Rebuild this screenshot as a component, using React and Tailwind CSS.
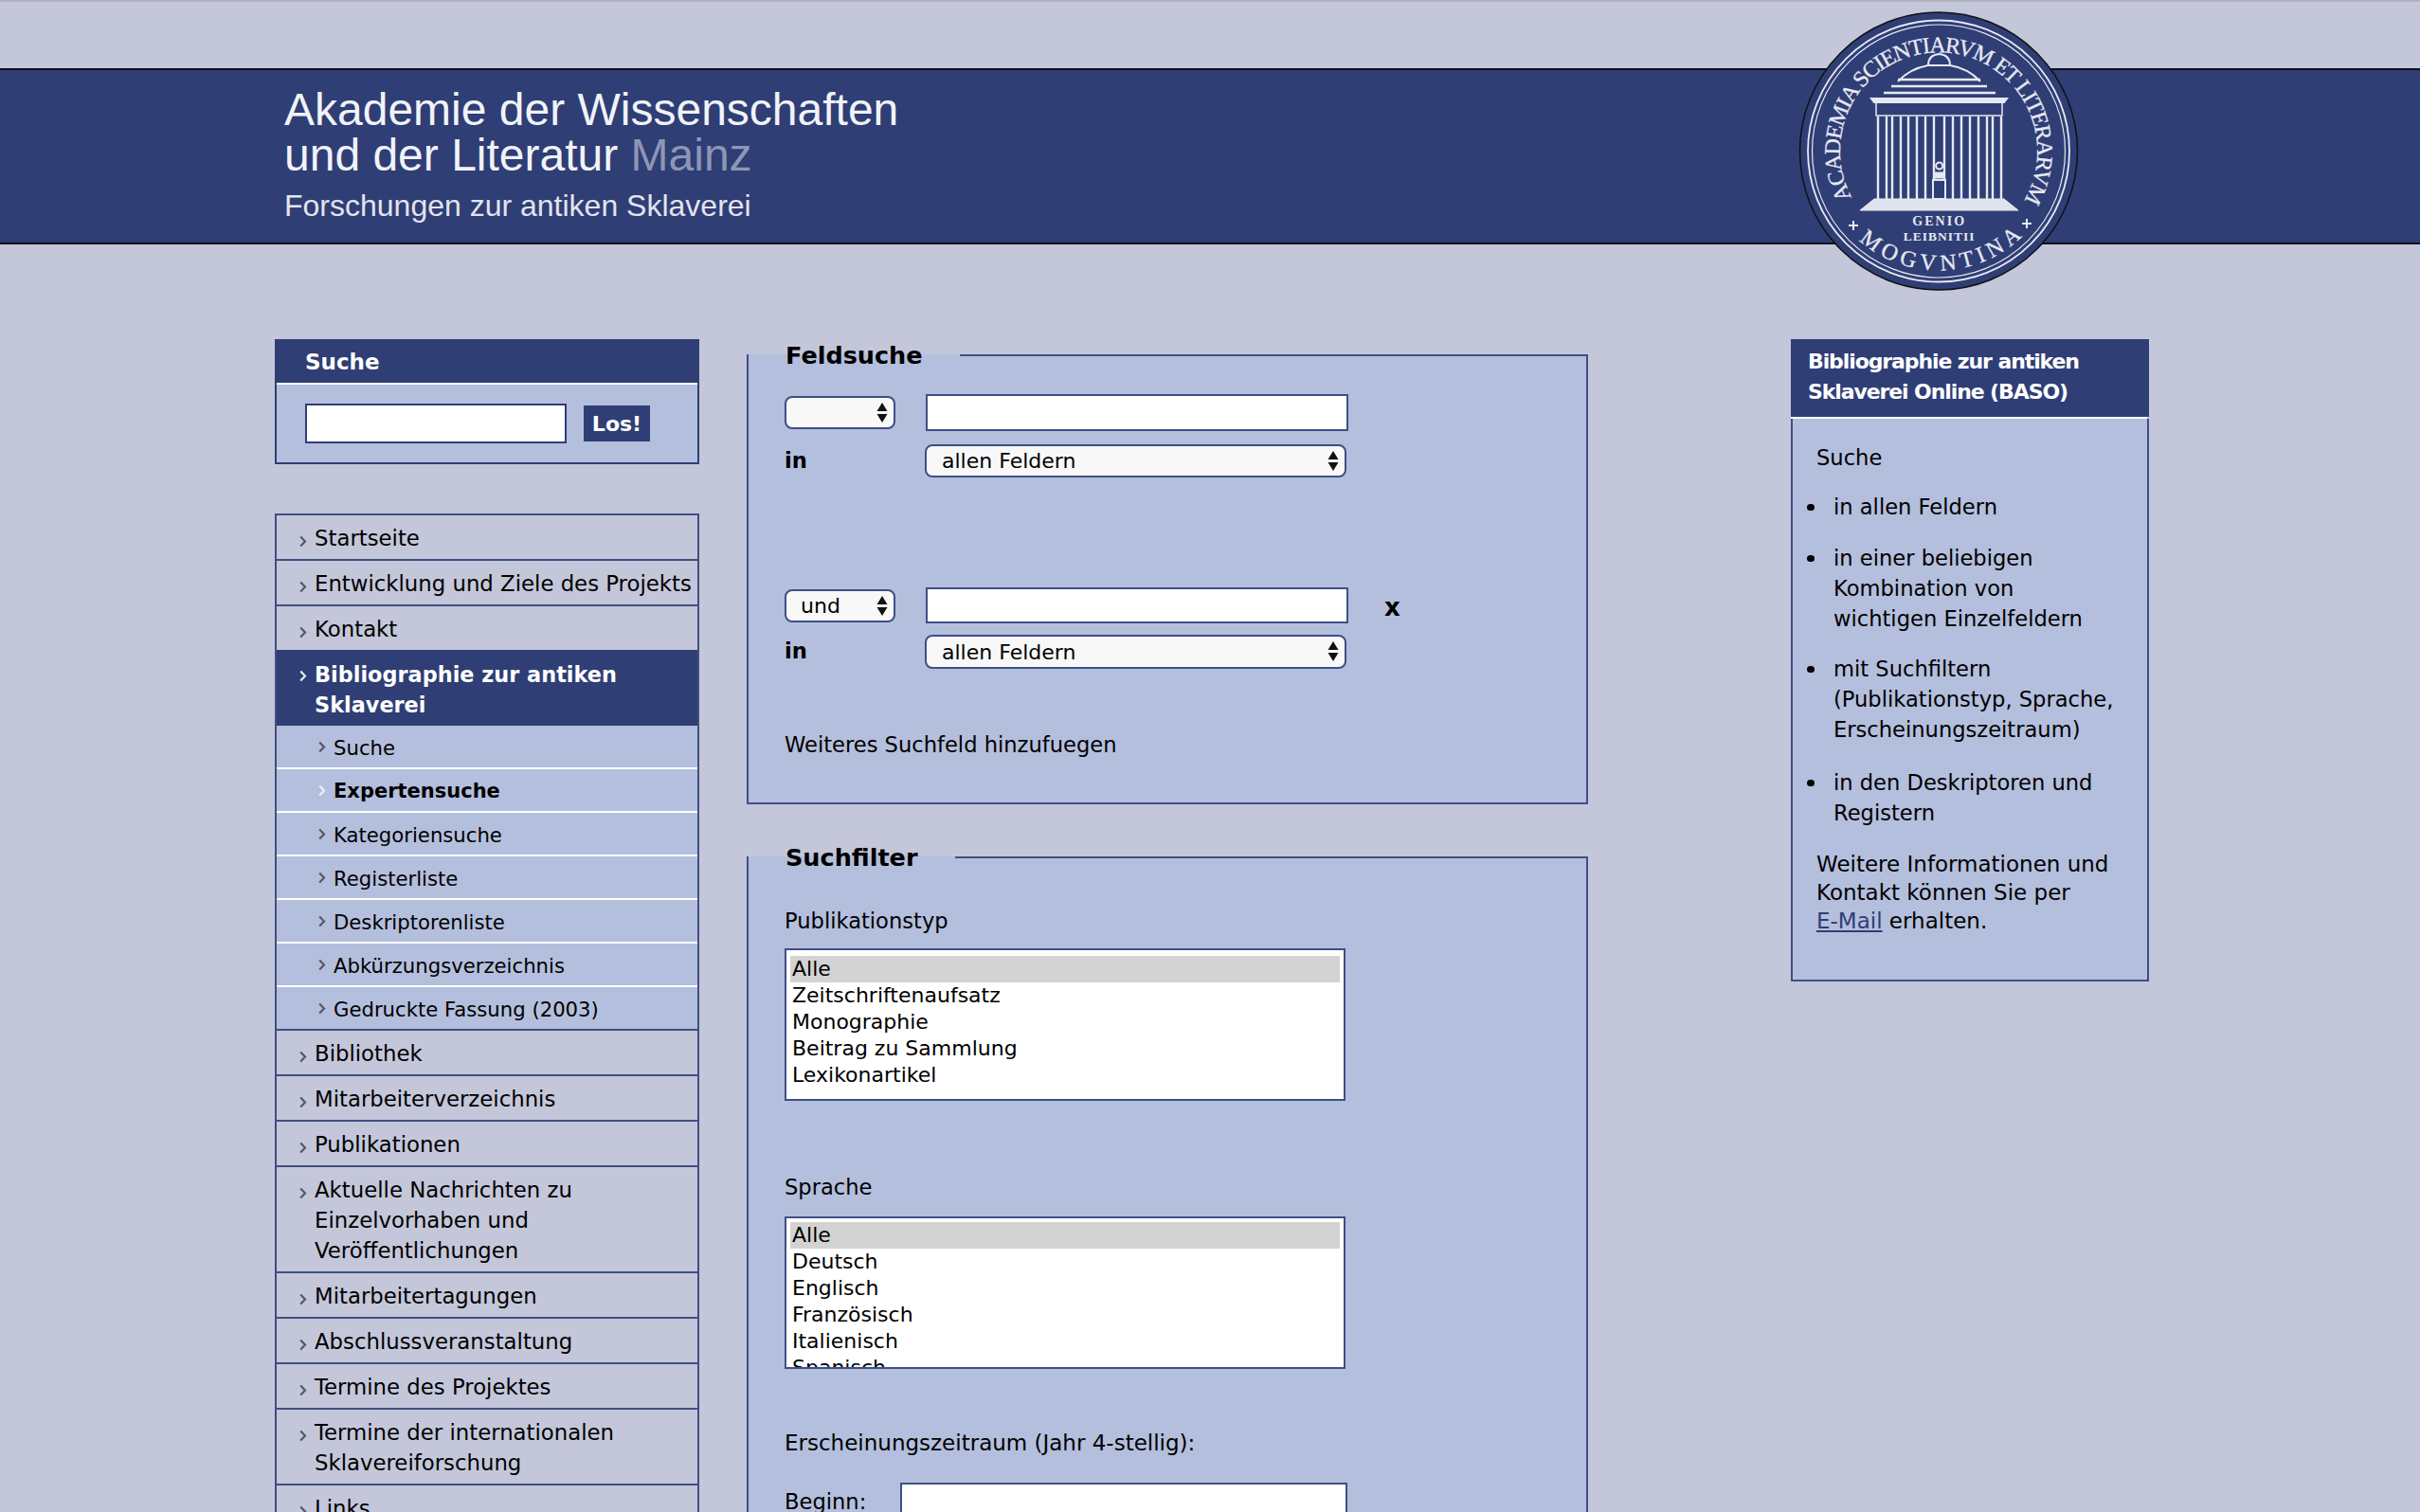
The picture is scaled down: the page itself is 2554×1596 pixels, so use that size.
import React from 'react';

const mainNavTop = [
  { label: ['Startseite'] },
  { label: ['Entwicklung und Ziele des Projekts'] },
  { label: ['Kontakt'] },
];

const subNav = [
  'Suche',
  'Expertensuche',
  'Kategoriensuche',
  'Registerliste',
  'Deskriptorenliste',
  'Abkürzungsverzeichnis',
  'Gedruckte Fassung (2003)',
];

const mainNavBottom = [
  { label: ['Bibliothek'] },
  { label: ['Mitarbeiterverzeichnis'] },
  { label: ['Publikationen'] },
  { label: ['Aktuelle Nachrichten zu', 'Einzelvorhaben und', 'Veröffentlichungen'] },
  { label: ['Mitarbeitertagungen'] },
  { label: ['Abschlussveranstaltung'] },
  { label: ['Termine des Projektes'] },
  { label: ['Termine der internationalen', 'Sklavereiforschung'] },
  { label: ['Links'] },
];

const Chevron = ({ className, color = '#55586a' }) => (
  <svg className={className} width="8" height="13" viewBox="0 0 8 13" fill="none">
    <path d="M1.2 1.5 L6 6.5 L1.2 11.5" stroke={color} strokeWidth="2.2" />
  </svg>
);

function NavRow({ lines }) {
  return (
    <div className="relative border-b-2 border-[#3f4f84] pl-[40px] pt-[8px] pb-[6px] leading-[32px]">
      <Chevron className="absolute left-[24px] top-[21px]" />
      {lines.map((line) => (
        <div key={line} className="whitespace-nowrap">{line}</div>
      ))}
    </div>
  );
}

function SelectBox({ value, className }) {
  return (
    <div className={`relative flex items-center rounded-[8px] border-2 border-[#3f4f84] bg-[#f8f8f8] text-[22px] ${className}`}>
      <span>{value}</span>
      <svg className="absolute right-[6px] top-[5px]" width="12" height="21" viewBox="0 0 12 21" fill="#111">
        <path d="M6 0 L11.5 9 L0.5 9 Z" />
        <path d="M0.5 12 L11.5 12 L6 21 Z" />
      </svg>
    </div>
  );
}

function ListBox({ items, className }) {
  return (
    <div className={`w-[592px] h-[161px] overflow-hidden border-2 border-[#3f4f84] bg-white px-[4px] text-[22px] leading-[28px] ${className}`}>
      {items.map((item, i) => (
        <div key={item} className={`pl-[2px] ${i === 0 ? 'bg-[#d3d3d3]' : ''}`}>{item}</div>
      ))}
    </div>
  );
}

function Bullet({ children, className = '' }) {
  return (
    <li className={`relative ${className}`}>
      <span className="absolute -left-[28px] top-[13px] h-[7px] w-[8px] rounded-full bg-black" />
      {children}
    </li>
  );
}

function Seal() {
  return (
    <svg className="absolute left-[1898px] top-[12px]" width="296" height="296" viewBox="0 0 296 296">
      <defs>
        <path id="sealTop" d="M56.2 196.3 A104 104 0 1 1 238 199.5" />
        <path id="sealBottom" d="M64 241.5 A126 126 0 0 0 236 237.5" />
      </defs>
      <circle cx="148" cy="147.5" r="146.5" fill="#2f3e75" stroke="#111" strokeWidth="1.5" />
      <circle cx="148" cy="147.5" r="138" fill="none" stroke="#e6e9f2" strokeWidth="1.8" />
      <circle cx="148" cy="147.5" r="133.5" fill="none" stroke="#e6e9f2" strokeWidth="1.2" />
      <g fontFamily="'Liberation Serif', serif" fill="#e6e9f2">
        <text fontSize="24" stroke="#e6e9f2" strokeWidth="0.3">
          <textPath href="#sealTop" textLength="432">ACADEMIA SCIENTIARVM ET LITERARVM</textPath>
        </text>
        <text fontSize="24" stroke="#e6e9f2" strokeWidth="0.3">
          <textPath href="#sealBottom" textLength="189">MOGVNTINA</textPath>
        </text>
        <text x="148.7" y="226" fontSize="14" fontWeight="700" textAnchor="middle" letterSpacing="2">GENIO</text>
        <text x="148.7" y="242" fontSize="13.5" fontWeight="700" textAnchor="middle" letterSpacing="1">LEIBNITII</text>
      </g>
      <g stroke="#e6e9f2" strokeWidth="2">
        <path d="M53 226 H63 M58 221 V231" />
        <path d="M236 224 H246 M241 219 V229" />
      </g>
      {/* temple */}
      <g stroke="#e6e9f2" fill="none">
        <path d="M137 57 Q137 46 148.5 45 Q160 46 160 57" strokeWidth="2" />
        <path d="M105 74 Q118 60 137 57 H160 Q179 60 192 74" strokeWidth="2" />
        <path d="M105 72 H192 M98 79 H199 M90 86 H208" strokeWidth="2.4" />
        <path d="M77 92 H220 L217 96 H80 Z" strokeWidth="2" fill="#e6e9f2" />
        <path d="M82 96 V110 H215 V96" strokeWidth="1.5" />
        {[84, 99, 116, 134, 154, 172, 190, 205].map((x) => (
          <path key={x} d="M0 111 V198 M9 111 V198" transform={`translate(${x} 0)`} strokeWidth="2.4" />
        ))}
        <path d="M80 198 H217 L232 210 H65 Z" fill="#dfe3ee" strokeWidth="1" />
        <path d="M142 178 H155 V198 H142 Z" strokeWidth="2" fill="#2f3e75" />
        <circle cx="148.7" cy="163" r="3.5" strokeWidth="2" fill="#2f3e75" />
        <path d="M143 170 H154 V176 H143 Z" fill="#e6e9f2" strokeWidth="1" />
      </g>
    </svg>
  );
}

export default function App() {
  return (
    <div className="relative h-[1596px] overflow-hidden bg-[#c4c7d9] font-['DejaVu_Sans',sans-serif] text-[22.8px] text-black">
      <div className="h-[2px] bg-[#b0b1b8]" />
      <div className="h-[70px]" />

      {/* banner */}
      <div className="h-[186px] border-y-2 border-[#0c0f1e] bg-[#2f3e75] pl-[300px] pt-[18px] font-['Liberation_Sans',sans-serif] text-[#f1f3f8]">
        <div className="text-[48px] leading-[48px]">Akademie der Wissenschaften</div>
        <div className="text-[48px] leading-[48px]">und der Literatur <span className="text-[#8e96b6]">Mainz</span></div>
        <div className="mt-[9px] text-[32px] leading-[40px] text-[#e2e4ee]">Forschungen zur antiken Sklaverei</div>
      </div>
      <Seal />

      <div className="flex items-start pl-[290px] pt-[100px]">
        {/* left column */}
        <div className="w-[448px] shrink-0">
          <div className="h-[132px] border-2 border-[#2f3e75] bg-[#b4bfdd]">
            <div className="h-[46px] -mt-[2px] -mx-[2px] bg-[#2f3e75] pl-[32px] pt-[8px] text-[23px] leading-[32px] font-bold text-white">Suche</div>
            <div className="h-[2px] bg-white" />
            <div className="flex items-center pl-[30px] pt-[20px]">
              <input className="h-[42px] w-[276px] border-2 border-[#2f3e75] bg-white" />
              <button className="ml-[18px] h-[38px] w-[70px] bg-[#2f3e75] text-[22px] font-bold text-white">Los!</button>
            </div>
          </div>

          <div className="mt-[52px] border-x-2 border-t-2 border-[#3f4f84]">
            {mainNavTop.map((row) => (
              <NavRow key={row.label[0]} lines={row.label} />
            ))}
            <div className="relative -mt-[2px] h-[80px] bg-[#2f3e75] pl-[40px] pt-[10px] text-[22.4px] font-bold leading-[32px] text-white">
              <Chevron className="absolute left-[24px] top-[21px]" color="#e6e9f2" />
              <div>Bibliographie zur antiken</div>
              <div>Sklaverei</div>
            </div>
            <div className="bg-[#b4bfdd] text-[21.2px]">
              {subNav.map((item, i) => (
                <div
                  key={item}
                  className={`relative flex h-[46px] items-center border-b-2 pl-[60px] pt-[4px] ${i === subNav.length - 1 ? 'border-[#3f4f84]' : 'border-white'} ${i === 1 ? 'font-bold text-[21px]' : ''}`}
                >
                  <Chevron className="absolute left-[44px] top-[16px]" color={i === 1 ? '#eef0f8' : '#55586a'} />
                  {item}
                </div>
              ))}
            </div>
            {mainNavBottom.map((row) => (
              <NavRow key={row.label[0]} lines={row.label} />
            ))}
          </div>
        </div>

        {/* middle column */}
        <div className="ml-[50px] w-[888px] shrink-0 text-[22.6px]">
          <fieldset className="border-2 border-[#3f4f84] bg-[#b4bfdd] pl-[38px] pb-[45px]">
            <legend className="px-[39px] -ml-[38px] text-[25.5px] font-bold leading-[34px]">Feldsuche</legend>
            <div className="mt-[24px] flex items-center">
              <SelectBox value="" className="h-[35px] w-[117px]" />
              <input className="ml-[32px] h-[39px] w-[446px] border-2 border-[#3f4f84] bg-white" />
            </div>
            <div className="mt-[14px] flex items-center">
              <div className="w-[148px] font-bold">in</div>
              <SelectBox value="allen Feldern" className="h-[35px] w-[445px] pl-[16px]" />
            </div>
            <div className="mt-[116px] flex items-center">
              <SelectBox value="und" className="h-[35px] w-[117px] pl-[15px]" />
              <input className="ml-[32px] h-[38px] w-[446px] border-2 border-[#3f4f84] bg-white" />
              <div className="ml-[38px] pt-[4px] text-[26px] font-bold leading-none">x</div>
            </div>
            <div className="mt-[12px] flex items-center">
              <div className="w-[148px] font-bold">in</div>
              <SelectBox value="allen Feldern" className="h-[36px] w-[445px] pl-[16px]" />
            </div>
            <div className="mt-[64px] leading-[32px]">Weiteres Suchfeld hinzufuegen</div>
          </fieldset>

          <fieldset className="mt-[39px] border-2 border-[#3f4f84] bg-[#b4bfdd] pl-[38px] pb-[40px]">
            <legend className="px-[39px] -ml-[38px] text-[25.5px] font-bold leading-[34px]">Suchfilter</legend>
            <div className="mt-[34px] leading-[32px]">Publikationstyp</div>
            <ListBox className="mt-[13px] pt-[6px]" items={['Alle', 'Zeitschriftenaufsatz', 'Monographie', 'Beitrag zu Sammlung', 'Lexikonartikel']} />
            <div className="mt-[75px] leading-[32px]">Sprache</div>
            <ListBox className="mt-[15px] pt-[4px]" items={['Alle', 'Deutsch', 'Englisch', 'Französisch', 'Italienisch', 'Spanisch', 'Latein']} />
            <div className="mt-[62px] text-[23px] leading-[32px]">Erscheinungszeitraum (Jahr 4-stellig):</div>
            <div className="mt-[26px] flex items-start">
              <div className="w-[122px] pt-[4px] leading-[32px]">Beginn:</div>
              <input className="h-[40px] w-[472px] border-2 border-[#3f4f84] bg-white" />
            </div>
          </fieldset>
        </div>

        {/* right column */}
        <div className="ml-[214px] w-[378px] shrink-0">
          <div className="h-[82px] bg-[#2f3e75] pl-[18px] pt-[8px] text-[22px] font-bold leading-[32px] tracking-[-1.1px] text-white">
            <div>Bibliographie zur antiken</div>
            <div>Sklaverei Online (BASO)</div>
          </div>
          <div className="h-[2px] bg-white mr-[2px]" />
          <div className="h-[594px] border-x-2 border-b-2 border-[#3f4f84] bg-[#b4bfdd] pl-[25px] pt-[25px] text-[22.6px]">
            <div className="leading-[32px]">Suche</div>
            <ul className="mt-[20px] list-none pl-[18px] leading-[32px]">
              <Bullet>in allen Feldern</Bullet>
              <Bullet className="mt-[22px]">in einer beliebigen<br />Kombination von<br />wichtigen Einzelfeldern</Bullet>
              <Bullet className="mt-[21px]">mit Suchfiltern<br />(Publikationstyp, Sprache,<br />Erscheinungszeitraum)</Bullet>
              <Bullet className="mt-[24px]">in den Deskriptoren und<br />Registern</Bullet>
            </ul>
            <div className="mt-[23px] text-[23px] leading-[30px]">
              Weitere Informationen und<br />
              Kontakt können Sie per<br />
              <a className="text-[#2f3e75] underline">E-Mail</a> erhalten.
            </div>
          </div>
        </div>
      </div>
    </div>
  );
}
